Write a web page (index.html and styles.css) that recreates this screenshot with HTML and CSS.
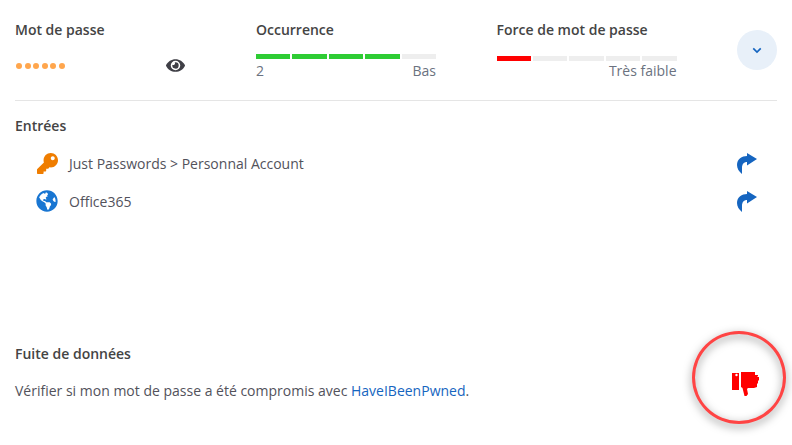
FILE: index.html
```html
<!DOCTYPE html>
<html lang="fr">
<head>
<meta charset="utf-8">
<title>Mot de passe</title>
<link rel="stylesheet" href="styles.css">
</head>
<body>
<main class="panel">
  <section class="summary">
    <div class="col password">
      <h3 class="label">Mot de passe</h3>
      <div class="pw-row">
        <span class="dots"><i></i><i></i><i></i><i></i><i></i><i></i></span>
        <svg class="eye" viewBox="0 0 576 512" aria-hidden="true"><path d="M572.52 241.4C518.29 135.59 410.93 64 288 64S57.68 135.64 3.48 241.41a32.35 32.35 0 0 0 0 29.19C57.71 376.41 165.07 448 288 448s230.32-71.64 284.52-177.41a32.35 32.35 0 0 0 0-29.19zM288 400a144 144 0 1 1 144-144 143.93 143.93 0 0 1-144 144zm0-240a95.31 95.31 0 0 0-25.31 3.79 47.85 47.85 0 0 1-66.9 66.9A95.78 95.78 0 1 0 288 160z"/></svg>
      </div>
    </div>
    <div class="col">
      <h3 class="label">Occurrence</h3>
      <div class="meter"><b class="green"></b><b class="green"></b><b class="green"></b><b class="green"></b><b></b></div>
      <div class="meter-text"><span>2</span><span>Bas</span></div>
    </div>
    <div class="col strength">
      <h3 class="label">Force de mot de passe</h3>
      <div class="meter"><b class="red"></b><b></b><b></b><b></b><b></b></div>
      <div class="meter-text end"><span>Très faible</span></div>
    </div>
    <button class="toggle" type="button" aria-label="Réduire">
      <svg viewBox="0 0 12 8" aria-hidden="true"><path d="M1.500 1.500 6 6l4.500-4.500" fill="none" stroke="currentColor" stroke-width="2"/></svg>
    </button>
  </section>

  <section class="entries">
    <h3 class="label">Entrées</h3>
    <ul class="entry-list">
      <li class="entry">
        <svg class="entry-icon key" viewBox="0 0 512 512" aria-hidden="true"><path d="M512 176.001C512 273.203 433.202 352 336 352c-11.22 0-22.19-1.062-32.827-3.069l-24.012 27.014A23.999 23.999 0 0 1 261.223 384H224v40c0 13.255-10.745 24-24 24h-40v40c0 13.255-10.745 24-24 24H24c-13.255 0-24-10.745-24-24v-78.059c0-6.365 2.529-12.47 7.029-16.971l161.802-161.802C163.108 213.814 160 195.271 160 176 160 78.798 238.797.001 335.999 0 433.488-.001 512 78.511 512 176.001zM336 128c0 26.51 21.49 48 48 48s48-21.49 48-48-21.49-48-48-48-48 21.49-48 48z"/></svg>
        <span class="entry-name">Just Passwords &gt; Personnal Account</span>
        <svg class="share" viewBox="0 0 20 21" aria-hidden="true"><path d="M10 0 20 6 10 12.500V9C7 9 5 11 5 15c0 2 0 4 0 6C2 18.500 0 15.500 0 12 0 6 5 3 10 3z"/></svg>
      </li>
      <li class="entry">
        <svg class="entry-icon globe" viewBox="0 0 496 512" aria-hidden="true"><path d="M248 8C111.03 8 0 119.03 0 256s111.03 248 248 248 248-111.03 248-248S384.97 8 248 8zm82.29 357.6c-3.9 3.88-7.99 7.95-11.31 11.28-2.99 3-5.1 6.7-6.17 10.71-1.51 5.66-2.73 11.38-4.77 16.87l-17.39 46.85c-13.76 3-28 4.69-42.65 4.69v-27.38c1.69-12.62-7.64-36.26-22.63-51.25-6-6-9.37-14.14-9.37-22.63v-32.01c0-11.64-6.27-22.34-16.46-27.97-14.37-7.95-34.81-19.06-48.81-26.11-11.48-5.78-22.1-13.14-31.65-21.75l-.8-.72a114.792 114.792 0 0 1-18.06-20.74c-9.38-13.77-24.66-36.42-34.59-51.14 20.47-45.5 57.36-82.04 103.2-101.89l24.01 12.01C203.48 89.74 216 82.01 216 70.11v-11.3c7.99-1.29 16.12-2.11 24.45-2.42l28.3 28.3c6.25 6.25 6.25 16.38 0 22.63L264 112l-10.34 10.34c-3.12 3.12-3.12 8.19 0 11.31l4.69 4.69c3.12 3.12 3.12 8.19 0 11.31l-8 8a8.008 8.008 0 0 1-5.66 2.34h-8.99c-2.08 0-4.08.81-5.58 2.27l-9.92 9.65a8.008 8.008 0 0 0-1.58 9.31l15.59 31.19c2.66 5.32-1.21 11.58-7.15 11.58h-5.64c-1.93 0-3.79-.7-5.24-1.96l-9.28-8.06a16.017 16.017 0 0 0-15.55-3.1l-31.17 10.39a11.95 11.95 0 0 0-8.17 11.34c0 4.53 2.56 8.66 6.61 10.69l11.08 5.54c9.41 4.71 19.79 7.16 30.31 7.16s22.59 27.29 32 32h66.75c8.49 0 16.62 3.37 22.63 9.37l13.69 13.69a30.503 30.503 0 0 1 8.93 21.57 46.536 46.536 0 0 1-13.72 32.98zM417 274.25c-5.79-1.45-10.84-5-14.15-9.97l-17.98-26.97a23.97 23.97 0 0 1 0-26.62l19.59-29.38c2.32-3.47 5.5-6.29 9.24-8.15l12.98-6.49C440.2 193.59 448 223.87 448 256c0 8.67-.74 17.16-1.82 25.54L417 274.25z"/></svg>
        <span class="entry-name">Office365</span>
        <svg class="share" viewBox="0 0 20 21" aria-hidden="true"><path d="M10 0 20 6 10 12.500V9C7 9 5 11 5 15c0 2 0 4 0 6C2 18.500 0 15.500 0 12 0 6 5 3 10 3z"/></svg>
      </li>
    </ul>
  </section>

  <section class="leak">
    <div class="leak-text">
      <h3 class="label">Fuite de données</h3>
      <p class="leak-line">Vérifier si mon mot de passe a été compromis avec <a href="#">HaveIBeenPwned</a>.</p>
    </div>
    <div class="verdict">
      <span class="ring"></span>
      <svg class="thumb" viewBox="0 0 27 24" aria-hidden="true"><path fill-rule="evenodd" d="M0 1h7v17H0zM4.500 1.800a1.200 1.200 0 1 0 0 2.400 1.200 1.200 0 0 0 0-2.400zM9 0h14v3h3v1l-1 1h2v3l-1 1v2l-1 1v3l-3 1h-6l-1 1 1 5-1.500 2h-2L10.500 16 9 15z"/></svg>
    </div>
  </section>
</main>
</body>
</html>
```
FILE: styles.css
```css
* { box-sizing: border-box; }
html, body { margin: 0; height: 100%; }
body {
  background: #fff;
  color: #4b5563;
  font-family: "Open Sans", "Noto Sans", sans-serif;
  font-size: 14px;
  overflow: hidden;
}
.panel {
  width: 792px;
  height: 445px;
  padding: 20px 15px 0;
  display: flex;
  flex-direction: column;
}
.label {
  margin: 0;
  font-size: 14px;
  font-weight: 600;
  line-height: 20px;
  color: #444;
}
.summary {
  display: flex;
  gap: 60.5px;
  height: 81px;
  border-bottom: 1px solid #e5e5e5;
  position: relative;
}
.col { width: 180px; flex: none; }
.col.password { width: 180.5px; }
.pw-row {
  display: flex;
  align-items: center;
  justify-content: space-between;
  padding: 0 10.5px 0 1px;
  margin-top: 15px;
  height: 20px;
}
.dots { display: flex; gap: 2.500px; margin-top: 2px; }
.dots i { width: 6px; height: 6px; border-radius: 50%; background: #ffa64d; }
.eye { width: 19px; height: 17px; fill: #3f3f46; }
.meter { display: flex; gap: 2px; height: 5px; margin-top: 14px; }
.strength .meter { margin-top: 16px; }
.meter b { flex: 1; background: #eee; }
.meter .green { background: #2ecc34; }
.meter .red { background: #f00; }
.meter-text {
  display: flex;
  justify-content: space-between;
  line-height: 20px;
  margin-top: 2px;
  color: #6b7280;
}
.meter-text.end { justify-content: flex-end; margin-top: 0; }
.toggle {
  position: absolute;
  right: 0;
  top: 10px;
  width: 40px;
  height: 40px;
  padding: 0;
  border: 0;
  border-radius: 50%;
  background: #e8f0f9;
  color: #1565c0;
  display: flex;
  align-items: center;
  justify-content: center;
}
.toggle svg { width: 10px; height: 7px; }
.entries { padding-top: 15px; flex: 1; }
.entry-list { list-style: none; margin: 8px 0 0; padding: 0; }
.entry {
  display: flex;
  align-items: center;
  height: 38px;
  padding: 0 20px 0 22px;
}
.entry-icon { width: 21px; height: 21px; flex: none; }
.key { fill: #ef7d00; }
.globe { fill: #1976d2; width: 22px; height: 22px; margin-left: -1px; }
.entry-name { margin-left: 11px; flex: 1; color: #52525b; }
.share { width: 20px; height: 21px; flex: none; fill: #1565c0; }
.leak {
  height: 101px;
  display: flex;
  justify-content: space-between;
  position: relative;
}
.leak-line { margin: 17px 0 0; line-height: 20px; color: #52525b; }
.leak-line a { color: #1565c0; text-decoration: none; }
.verdict {
  position: absolute;
  right: -9px;
  top: -13px;
  width: 94px;
  height: 93px;
  display: flex;
  align-items: center;
  justify-content: center;
}
.ring {
  position: absolute;
  inset: 0;
  border: 3px solid #f44;
  border-radius: 50%;
  filter: drop-shadow(0 3px 4px rgba(0,0,0,.5));
}
.thumb { width: 27px; height: 24px; margin: 12px 0 0 13px; fill: #f00; }
```
